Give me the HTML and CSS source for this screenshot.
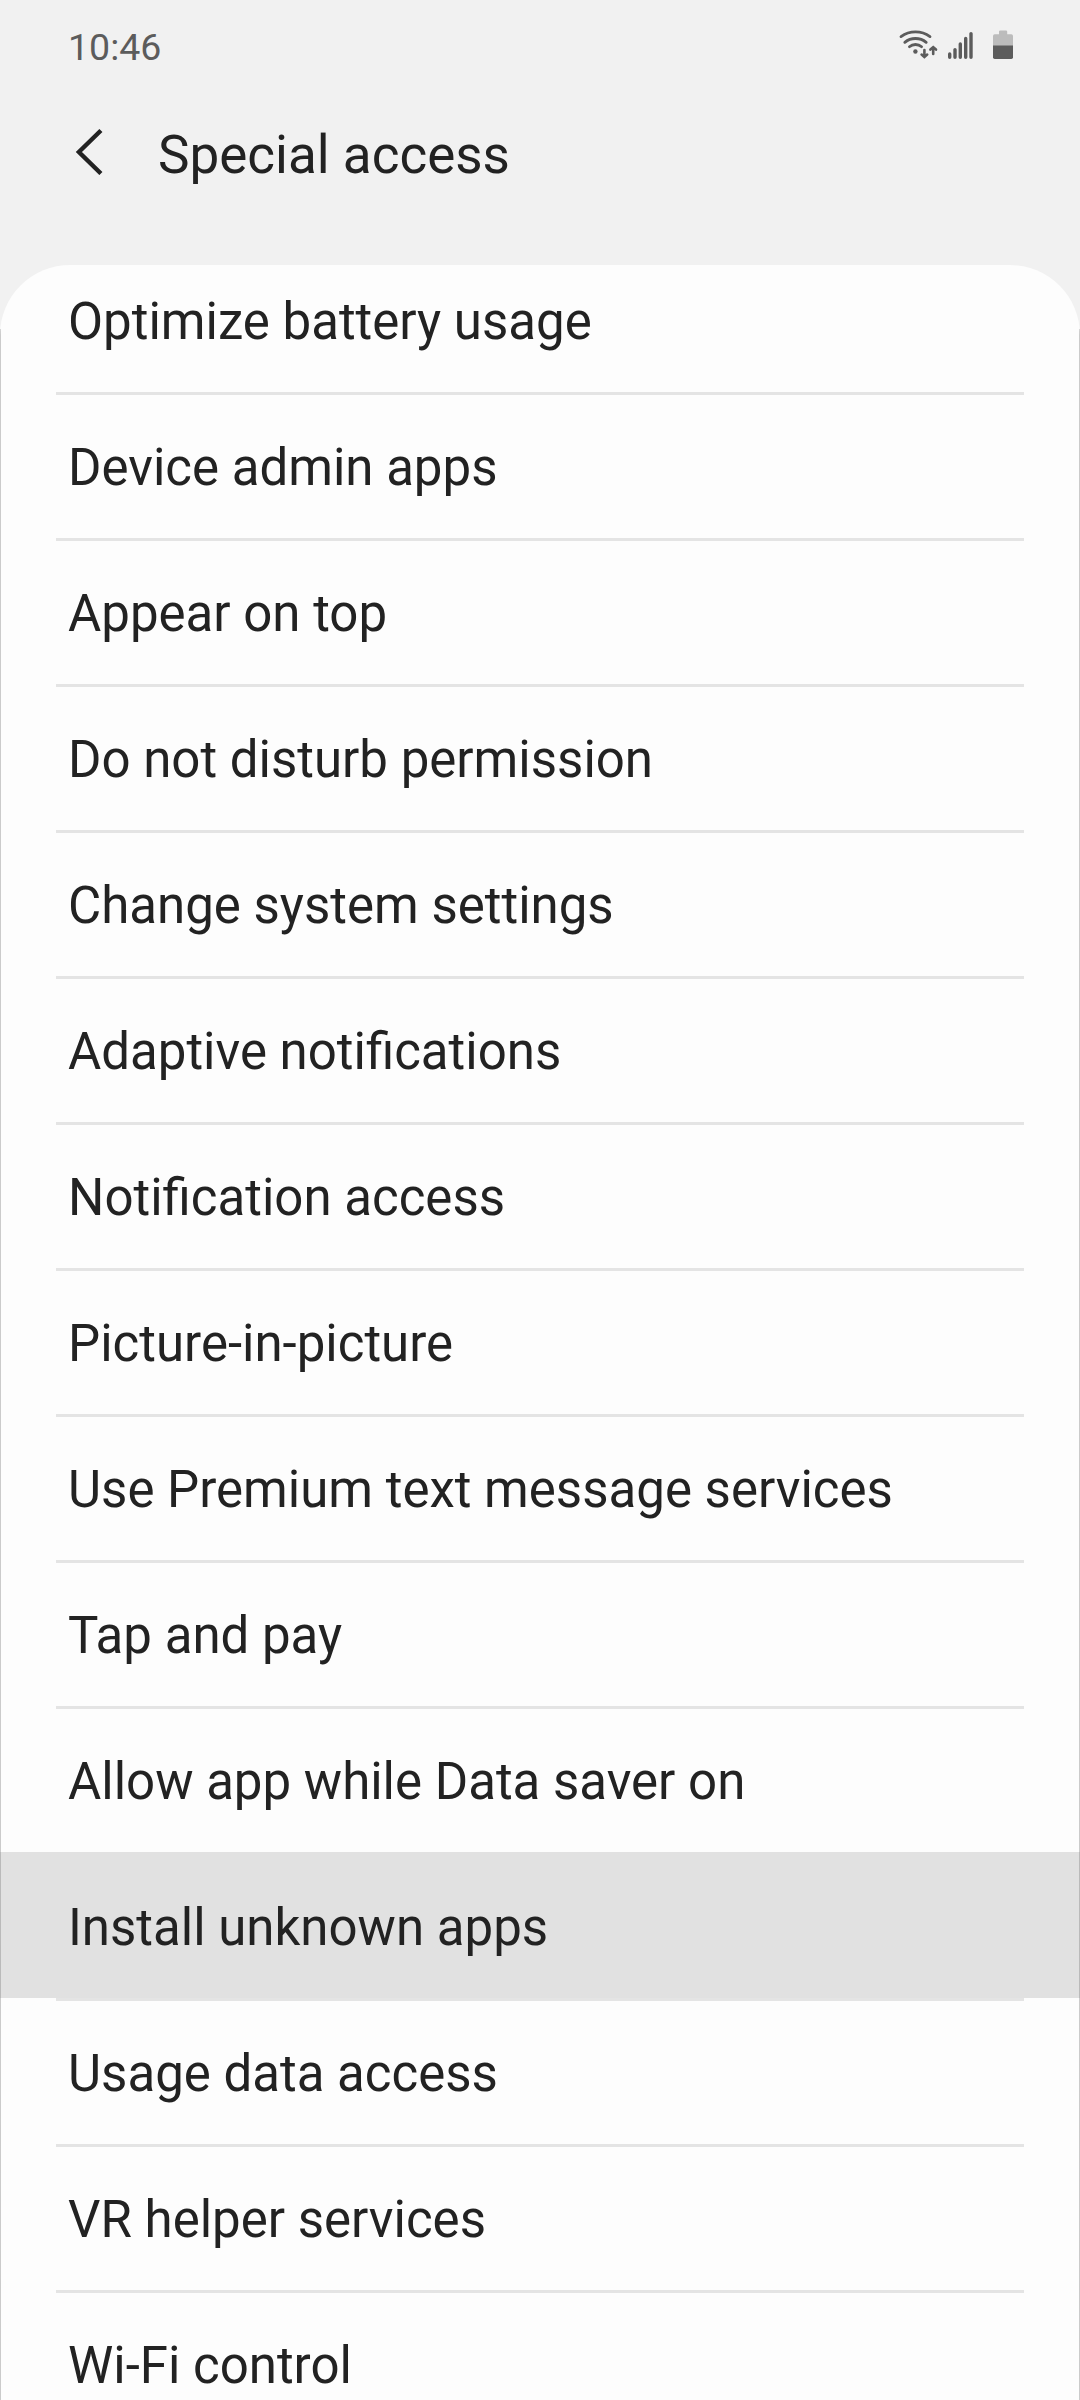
FILE: index.html
```
<!DOCTYPE html>
<html lang="en">
<head>
<meta charset="utf-8">
<title>Special access</title>
<link rel="stylesheet" href="styles.css">
</head>
<body>
<div class="screen">
  <header class="status-bar">
    <span class="clock">10:46</span>
    <svg class="status-icons" width="116" height="32" viewBox="898 29 116 32" aria-hidden="true">
      <g fill="none" stroke="#5c5c5c" stroke-width="2.8" stroke-linecap="round">
        <path d="M901 36.6Q907.5 31.9 915.5 31.9T930 36.6"/>
        <path d="M904.8 42.3Q909.4 38.5 915.5 38.5T926.2 42.3"/>
        <path d="M909.4 46.7Q912 44.5 915.5 44.5T921.6 46.700"/>
        <path stroke-width="2.6" d="M924.400 50V56.500M921.600 54.600l2.800 2.400 2.800-2.400M933.200 54V47.500M930.400 49.600l2.800-2.400 2.800 2.400"/>
      </g>
      <circle cx="915.4" cy="51.5" r="2.200" fill="#5c5c5c"/>
      <g stroke="#5c5c5c" stroke-width="3.400" stroke-linecap="round">
        <path d="M949.7 53.9V57.2M955 49.6V57.2M960.3 44V57.2M965.7 38.4V57.2M971 33.6V57.2"/>
      </g>
      <path fill="#bcbcbc" d="M993 46V36q0-1.7 1.7-1.7H999V31.600q0-1.200 1.200-1.200H1006q1.200 0 1.200 1.200V34.300H1011.300q1.700 0 1.700 1.700V46z"/>
      <path fill="#5c5c5c" d="M993 45.600h20V57.300q0 1.700-1.700 1.700H994.700q-1.700 0-1.700-1.700z"/>
    </svg>
  </header>
  <div class="title-bar">
    <svg class="back" width="30" height="48" viewBox="0 0 30 48" role="img" aria-label="Back">
      <path d="M25.900 3.500 3.900 25 25.900 46.500" fill="none" stroke="#222" stroke-width="4.400"/>
    </svg>
    <h1 class="title">Special access</h1>
  </div>
  <main class="card">
    <ul class="list">
      <li class="row">Optimize battery usage</li>
      <li class="row">Device admin apps</li>
      <li class="row">Appear on top</li>
      <li class="row">Do not disturb permission</li>
      <li class="row">Change system settings</li>
      <li class="row">Adaptive notifications</li>
      <li class="row">Notification access</li>
      <li class="row">Picture-in-picture</li>
      <li class="row">Use Premium text message services</li>
      <li class="row">Tap and pay</li>
      <li class="row">Allow app while Data saver on</li>
      <li class="row pressed">Install unknown apps</li>
      <li class="row">Usage data access</li>
      <li class="row">VR helper services</li>
      <li class="row">Wi-Fi control</li>
    </ul>
  </main>
</div>
</body>
</html>
```
FILE: styles.css
```
* {
  box-sizing: border-box;
}

body {
  margin: 0;
  background: #f1f1f1;
  color: #222;
  font-family: Roboto, "Liberation Sans", sans-serif;
}

.screen {
  display: flex;
  flex-direction: column;
  width: 1080px;
  height: 2400px;
  overflow: hidden;
}

.status-bar {
  display: flex;
  flex: none;
  justify-content: space-between;
  align-items: flex-start;
  height: 90px;
  padding: 29px 66px 0 68px;
}

.clock {
  padding-top: 1px;
  color: #5c5c5c;
  font-size: 37.5px;
  line-height: 34px;
}

.title-bar {
  display: flex;
  flex: none;
  align-items: flex-start;
  height: 175px;
  padding: 37px 0 0 75px;
}

.title {
  margin: 0 0 0 53px;
  font-size: 53px;
  font-weight: 400;
  line-height: 56px;
}

.card {
  flex: 1;
  min-height: 0;
  overflow: hidden;
  border-radius: 70px 70px 0 0;
  background:
    linear-gradient(#cbcbcb, #cbcbcb) 0 64px / 1px 100% no-repeat,
    linear-gradient(#cbcbcb, #cbcbcb) 100% 64px / 1px 100% no-repeat,
    #fdfdfd;
}

.list {
  margin: -19px 0 0;
  padding: 0;
  list-style: none;
}

.row {
  height: 146px;
  padding: 46px 68px 0;
  font-size: 51px;
  line-height: 60px;
  white-space: nowrap;
  background: linear-gradient(#e4e4e4, #e4e4e4) 56px 0 / 968px 3px no-repeat;
}

.row:first-child {
  background: none;
}

.pressed {
  border: 1px solid #bababa;
  border-width: 0 1px;
  padding: 46px 67px 0;
  background: #e1e1e1;
}
```
